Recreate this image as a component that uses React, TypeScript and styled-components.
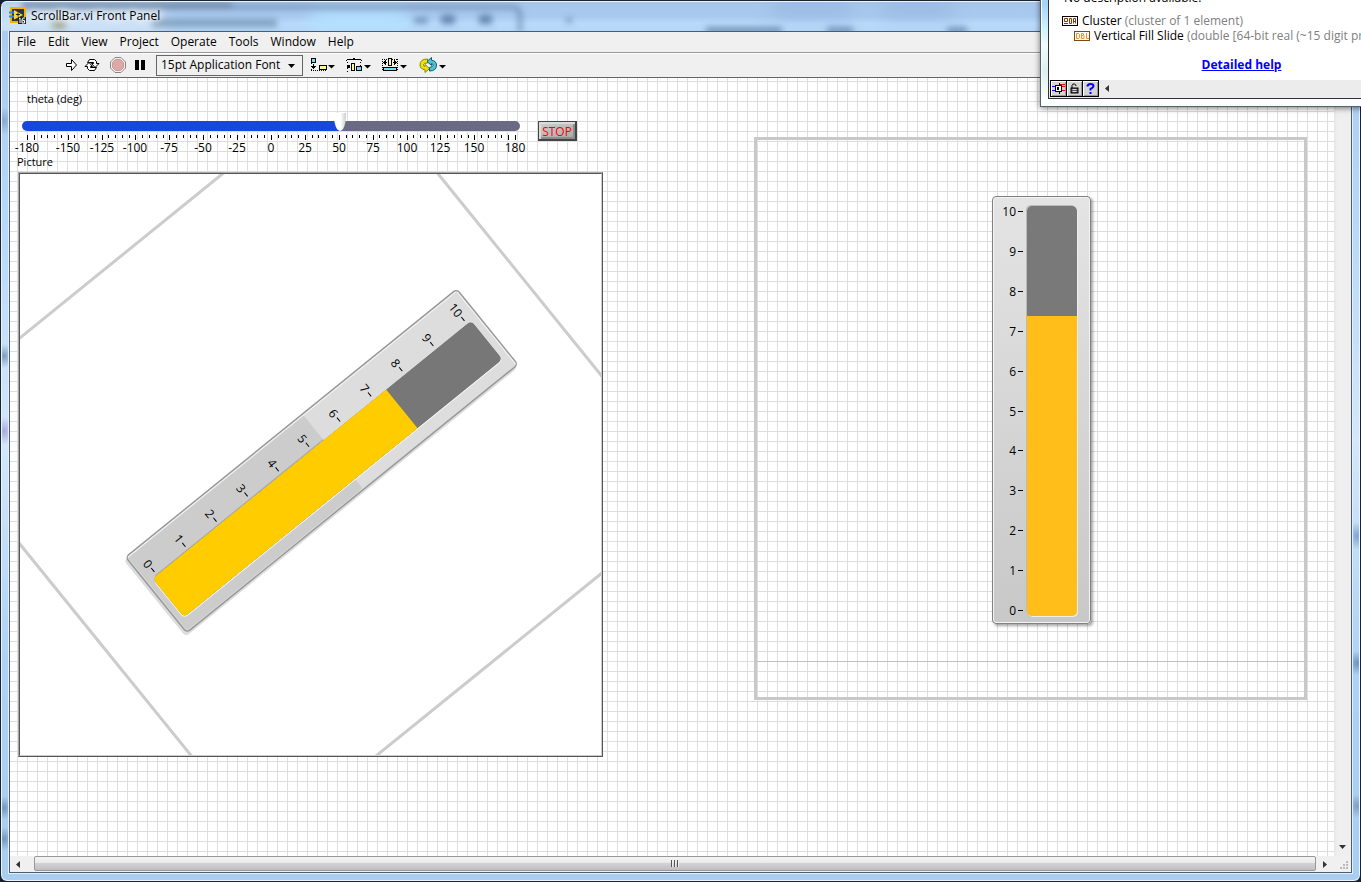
import React, { useState } from "react";
import styled, { createGlobalStyle } from "styled-components";

const GlobalStyle = createGlobalStyle`
  *, *::before, *::after { box-sizing: border-box; }
  body {
    margin: 0;
    font-family: "Open Sans", "Noto Sans", sans-serif;
    font-size: 12px;
    line-height: 16px;
    color: #000;
    background: #17202c;
  }
  button, select, input { font: inherit; color: inherit; margin: 0; }
`;

/* ---------- window frame ---------- */

const Desktop = styled.div`
  position: relative;
  min-height: 100vh;
  display: flex;
  overflow: hidden;
`;

const WindowFrame = styled.div`
  position: relative;
  flex: 1;
  min-width: 0;
  display: flex;
  flex-direction: column;
  padding: 0 8px 8px;
  border: 1px solid #1b2330;
  border-radius: 7px;
  box-shadow: inset 0 0 0 1px #e8f6ff;
  background:
    radial-gradient(ellipse 10px 12px at 3px 355px, #7f9dbc, transparent),
    radial-gradient(ellipse 10px 14px at 3px 120px, #8aa8cc, transparent),
    radial-gradient(ellipse 10px 14px at 3px 430px, #a9a9e0, transparent),
    radial-gradient(ellipse 10px 12px at 3px 807px, #7697bd, transparent),
    radial-gradient(ellipse 10px 12px at 3px 838px, #7697bd, transparent),
    radial-gradient(ellipse 10px 14px at calc(100% - 3px) 535px, #7ea4cf, transparent),
    radial-gradient(ellipse 10px 12px at calc(100% - 3px) 662px, #6f93bb, transparent),
    radial-gradient(ellipse 10px 12px at calc(100% - 3px) 805px, #7f9fc0, transparent),
    linear-gradient(#a9c9ee, #b6d8fa 25%, #d5e7f8 50%, #aed2f6 75%, #aacdf2);
`;

const TitleBar = styled.header`
  position: relative;
  height: 30px;
  display: flex;
  align-items: center;
  gap: 4px;
  margin: 0 -7px;
  padding: 0 7px 2px;
  border-top: 1px solid #e8f6ff;
  border-radius: 6px 6px 0 0;
  overflow: hidden;
  background: linear-gradient(#a6c6ec, #a9caef 50%, #b9dafa 75%, #b4d6f8);
`;

const GlassReflection = styled.svg`
  position: absolute;
  inset: 0;
  width: 100%;
  height: 100%;
`;

const TitleText = styled.h1`
  position: relative;
  margin: 0;
  font-size: 12px;
  font-weight: 400;
  line-height: 16px;
  white-space: nowrap;
  text-shadow: 0 0 6px #fff, 0 0 8px #fff, 0 0 12px #fff;
`;

const TitleIcon = styled.svg`
  position: relative;
  flex: none;
`;

const Client = styled.main`
  flex: 1;
  display: flex;
  flex-direction: column;
  min-height: 0;
  border: 1px solid #4d5c70;
  background: #f0f0f0;
  box-shadow: 0 0 0 1px #dff0ff;
`;

/* ---------- menu and toolbar ---------- */

const MenuBar = styled.nav`
  display: flex;
  height: 21px;
  padding: 0 1px;
  border-bottom: 1px solid #999;
`;

const MenuItem = styled.button`
  border: 0;
  padding: 0 6px;
  line-height: 18px;
  background: none;
  white-space: nowrap;
`;

const Toolbar = styled.div`
  display: flex;
  align-items: center;
  height: 25px;
  padding-left: 53px;
  border-top: 1px solid #fff;
  border-bottom: 1px solid #666;
`;

const ToolButton = styled.button<{ $width: number }>`
  display: grid;
  place-items: center;
  flex: none;
  width: ${(p) => p.$width}px;
  height: 20px;
  margin-bottom: 2px;
  padding: 0;
  border: 0;
  background: none;
`;

const FontPicker = styled.label`
  position: relative;
  flex: none;
  margin: 0 6px 0 7px;
`;

const FontSelect = styled.select`
  appearance: none;
  display: block;
  width: 147px;
  height: 21px;
  padding: 0 20px 1px 4px;
  border: 1px solid #666;
  border-radius: 0;
  line-height: 18px;
  background: #f0f0f0;
`;

const FontArrow = styled.svg`
  position: absolute;
  right: 8px;
  top: 9px;
  pointer-events: none;
`;

/* ---------- front panel ---------- */

const Workspace = styled.div`
  flex: 1;
  display: grid;
  grid-template-columns: minmax(0, 1fr) 17px;
  grid-template-rows: 1fr 16px;
`;

const Panel = styled.section`
  display: flex;
  align-items: flex-start;
  overflow: hidden;
  background-color: #fff;
  background-image:
    linear-gradient(#dedede 1px, transparent 1px),
    linear-gradient(90deg, #dedede 1px, transparent 1px);
  background-size: 10px 10px;
  background-position: 7px 3px;
`;

const ControlColumn = styled.div`
  flex: none;
  padding: 12px 0 0 8px;
`;

const ControlRow = styled.div`
  display: flex;
  padding-left: 4px;
`;

const ThetaControl = styled.div`
  width: 498px;
`;

const ThetaLabel = styled.label`
  display: block;
  padding-left: 5px;
  font-size: 11px;
  line-height: 18px;
`;

const ThetaInput = styled.input<{ $fill: number }>`
  appearance: none;
  display: block;
  width: 100%;
  height: 10px;
  margin-top: 13px;
  background: none;

  &::-webkit-slider-runnable-track {
    height: 10px;
    border-radius: 5px;
    background: linear-gradient(90deg, #1846e0 ${(p) => p.$fill}%, #6b6a85 ${(p) => p.$fill}%);
  }
  &::-webkit-slider-thumb {
    appearance: none;
    width: 12px;
    height: 18px;
    margin-top: -8px;
    border-radius: 0 0 6px 6px / 0 0 15px 15px;
    background: linear-gradient(90deg, #fff 55%, #ccc);
  }
`;

const ThetaScale = styled.svg`
  display: block;
  width: 100%;
  height: 23px;
  overflow: visible;
  font-size: 12px;
`;

const StopButton = styled.button`
  width: 39px;
  height: 20px;
  margin: 31px 0 0 18px;
  padding: 2px 0 0;
  border: 1px solid #444;
  border-bottom-width: 2px;
  border-right-width: 2px;
  color: #f00;
  line-height: 16px;
  background: linear-gradient(160deg, #cfcfcf, #a8a8a8);
  box-shadow: inset 2px 2px 1px #dcdcdc, inset -2px -2px 1px #8a8a8a;
`;

const PictureFigure = styled.figure`
  margin: 0;
  display: flex;
  flex-direction: column;
`;

const PictureCaption = styled.figcaption`
  margin: 0 0 2px -1px;
  font-size: 11px;
  line-height: 16px;
`;

const PictureFrame = styled.div`
  width: 585px;
  border: 1px solid;
  border-color: #aaa #555 #555 #aaa;
`;

const PictureView = styled.svg`
  display: block;
  width: 583px;
  height: 583px;
  border: 1px solid;
  border-color: #555 #ccc #ccc #555;
  background: #fff;
  font-size: 12px;
`;

const Cluster = styled.div`
  flex: none;
  width: 553px;
  height: 563px;
  margin: 59px 0 0 151px;
  padding-top: 56px;
  border: 3px solid #c8c8c8;
`;

const ClusterRule = styled.hr`
  height: 1px;
  margin: 37px 0 0;
  border: 0;
  background: #c0c0c0;
`;

const FillSlide = styled.div`
  display: flex;
  width: 99px;
  height: 428px;
  margin-left: 235px;
  padding: 9px 0 8px;
  border: 1px solid #808080;
  border-radius: 4px;
  background: linear-gradient(#e4e4e4, #c8c8c8);
  box-shadow: inset 0 0 0 1px #f4f4f4, 2px 2px 3px rgba(0, 0, 0, 0.35);
`;

const SlideScale = styled.svg`
  width: 34px;
  height: 410px;
  overflow: visible;
  font-size: 12px;
`;

const SlideInput = styled.input<{ $fill: number }>`
  appearance: none;
  writing-mode: vertical-lr;
  direction: rtl;
  width: 50px;
  height: 410px;
  border-radius: 5px;
  background: linear-gradient(0deg, #ffbe19 ${(p) => p.$fill}%, #797979 ${(p) => p.$fill}%);
  box-shadow: -1px -1px 0 #bbb, 1px 1px 0 #eee;

  &::-webkit-slider-thumb {
    appearance: none;
    width: 50px;
    height: 10px;
    background: transparent;
  }
`;

/* ---------- scroll bars ---------- */

const VerticalScroll = styled.div`
  display: flex;
  flex-direction: column;
  justify-content: space-between;
  padding-bottom: 2px;
  background: linear-gradient(90deg, #e6e6e6, #efefef 20%, #efefef);
`;

const HorizontalScroll = styled.div`
  display: flex;
  background: #f0f0f0;
`;

const ScrollButton = styled.button<{ $gap?: number }>`
  flex: none;
  display: grid;
  place-items: center;
  width: 16px;
  height: 16px;
  margin-right: ${(p) => p.$gap ?? 0}px;
  padding: 0;
  border: 0;
  background: none;
`;

const ScrollThumb = styled.div`
  flex: 1;
  display: grid;
  place-items: center;
  height: 15px;
  border: 1px solid #979797;
  border-radius: 2px;
  background: linear-gradient(#f5f5f5, #e9e9eb 45%, #d2d2d5 50%, #bfbfc3);
`;

const SizeGrip = styled.svg`
  width: 16px;
  height: 16px;
`;

/* ---------- context help window ---------- */

const HelpWindow = styled.aside`
  position: absolute;
  top: -30px;
  right: -82px;
  width: 403px;
  height: 137px;
  padding: 0 7px 7px;
  border: 1px solid #59616b;
  background: linear-gradient(#a8d4f8 25%, #cdf3fb 42%, #eefcfc 55%, #dcf0ee 75%, #fdfdfd 95%);
  box-shadow: inset 0 0 0 1px #f4ffff, 0 1px 6px rgba(0, 0, 0, 0.55);
`;

const HelpClient = styled.div`
  height: 100%;
  display: flex;
  flex-direction: column;
  border: 1px solid #30343a;
  background: #fff;
`;

const HelpText = styled.p`
  margin: 18px 0 7px 15px;
`;

const HelpRow = styled.div<{ $indent: number }>`
  display: flex;
  align-items: center;
  gap: 4px;
  height: 15px;
  padding-left: ${(p) => p.$indent}px;
  white-space: nowrap;
`;

const Muted = styled.span`
  color: #808080;
`;

const HelpLink = styled.a`
  align-self: center;
  margin-top: 14px;
  font-weight: 700;
  color: #00f;
`;

const HelpBar = styled.div`
  display: flex;
  align-items: flex-start;
  margin-top: auto;
  height: 18px;
  padding-left: 1px;
  background: #ececec;
`;

const HelpButton = styled.button`
  display: grid;
  place-items: center;
  width: 17px;
  height: 17px;
  margin-right: -1px;
  padding: 0;
  border: 1px solid #000;
  background: #d4d4d4;
  box-shadow: inset 1px 1px 0 #fff, inset -1px -1px 0 #999;
`;

const HelpCollapse = styled.button`
  display: grid;
  place-items: center;
  width: 18px;
  height: 16px;
  padding: 0;
  border: 0;
  background: none;
`;

/* ---------- drawings ---------- */

const DropArrow = ({ x, y }: { x: number; y: number }) => (
  <path d={`M${x} ${y}h7l-3.500 3.500z`} fill="#000" shapeRendering="auto" />
);

const LabViewIcon = () => (
  <TitleIcon width="18" height="18" viewBox="0 0 18 18" aria-hidden="true">
    <rect x="2" y="1" width="14" height="14" fill="#2e3338" stroke="#f0b400" strokeWidth="2" />
    <path d="M0 5.500h6M0 9.500h6" stroke="#2d8be0" strokeWidth="2" />
    <path d="M5 3v9.500l9-4.500z" fill="#ffd633" />
    <path d="M7 7.500h4M9 5.500v4" stroke="#222" strokeWidth="1" />
    <rect x="9" y="10" width="8" height="7" fill="#222" />
    <path d="M10 11.500l1-.5v5M16 11h-2l-1 2v3h2.500v-2.500h-2" stroke="#fff" fill="none" />
  </TitleIcon>
);

const GlassShapes = () => (
  <GlassReflection aria-hidden="true">
    <defs>
      <filter id="soft" x="-20%" y="-50%" width="140%" height="200%">
        <feGaussianBlur stdDeviation="3" />
      </filter>
      <filter id="softer" x="-50%" y="-100%" width="200%" height="300%">
        <feGaussianBlur stdDeviation="9" />
      </filter>
    </defs>
    <rect x="-10" y="0" width="170" height="34" fill="#d8e6f4" opacity="0.7" filter="url(#softer)" />
    <rect x="310" y="8" width="95" height="26" fill="#b4e0ff" filter="url(#softer)" />
    <rect x="770" y="0" width="80" height="15" fill="#8dafd8" opacity="0.6" filter="url(#softer)" />
    <rect x="880" y="0" width="70" height="15" fill="#8dafd8" opacity="0.6" filter="url(#softer)" />
    <g filter="url(#soft)">
      <path d="M20 5H510Q518 5 518 13V30" fill="none" stroke="#58789c" strokeWidth="4" opacity="0.7" />
      <rect x="20" y="0" width="210" height="5" fill="#5a6f86" opacity="0.6" />
      <rect x="150" y="17" width="125" height="8" fill="#5d7998" opacity="0.6" />
      <rect x="50" y="18" width="14" height="9" fill="#8a8a58" opacity="0.6" />
      <rect x="412" y="16" width="14" height="5" fill="#43678f" opacity="0.7" />
      <rect x="439" y="13" width="14" height="9" fill="#43678f" opacity="0.7" />
      <rect x="477" y="13" width="13" height="9" fill="#43678f" opacity="0.7" />
      <rect x="564" y="16" width="6" height="5" fill="#43678f" opacity="0.6" />
      <rect x="704" y="25" width="76" height="7" fill="#5478a0" opacity="0.7" />
      <rect x="825" y="25" width="26" height="7" fill="#5478a0" opacity="0.7" />
      <rect x="945" y="25" width="20" height="7" fill="#5478a0" opacity="0.7" />
    </g>
  </GlassReflection>
);

const RunIcon = () => (
  <svg width="13" height="14" viewBox="0 0 13 14" aria-hidden="true">
    <path d="M1.500 5.500h5v-4l5 5.500-5 5.500v-4h-5z" fill="#fff" stroke="#000" />
  </svg>
);

const RunContinuouslyIcon = () => (
  <svg width="16" height="14" viewBox="0 0 16 14" aria-hidden="true">
    <g fill="#fff" stroke="#000">
      <path id="turn" d="M3.500 4.500l2-3h5l2 2v2H15L11 9.500 7.500 5.500h2v-1z" />
      <path d="M3.500 4.500l2-3h5l2 2v2H15L11 9.500 7.500 5.500h2v-1z" transform="rotate(180 8 7)" />
    </g>
  </svg>
);

const AbortIcon = () => (
  <svg width="16" height="16" viewBox="0 0 16 16" aria-hidden="true">
    <path d="M5 .5h6L15.500 5v6L11 15.500H5L.5 11V5z" fill="#f4f0f0" stroke="#8c8484" />
    <path d="M5.500 2.500h5l3 3v5l-3 3h-5l-3-3v-5z" fill="#dca8a8" stroke="#c99" />
  </svg>
);

const PauseIcon = () => (
  <svg width="10" height="12" viewBox="0 0 10 12" shapeRendering="crispEdges" aria-hidden="true">
    <path d="M0 1h4v10H0zM6 1h4v10H6z" fill="#000" />
  </svg>
);

const AlignIcon = () => (
  <svg width="26" height="16" viewBox="0 0 26 16" shapeRendering="crispEdges" aria-hidden="true">
    <rect x="1.500" y="1.500" width="4" height="4" fill="#6fe0f0" stroke="#000" />
    <path d="M3 7h1v5H3zM1 9h5v1H1zM2 10h3v1H2z" fill="#000" />
    <path d="M1 13.500h16" stroke="#000" strokeDasharray="1 1" />
    <path d="M1.500 6v7" stroke="#000" strokeDasharray="1 2" />
    <rect x="9.500" y="8.500" width="7" height="4" fill="#fff79a" stroke="#000" />
    <DropArrow x={18} y={8} />
  </svg>
);

const DistributeIcon = () => (
  <svg width="26" height="16" viewBox="0 0 26 16" shapeRendering="crispEdges" aria-hidden="true">
    <path d="M0 3h1V2h6V1h2v1h6v1h1v1h-1V3H1v1H0z" fill="#000" />
    <rect x="1" y="8" width="3" height="3" fill="#000" />
    <path d="M1.500 5v10M14.500 5v4" stroke="#000" strokeDasharray="1 2" />
    <rect x="5.500" y="6.500" width="3" height="7" fill="#fff79a" stroke="#000" />
    <rect x="10.500" y="9.500" width="5" height="4" fill="#6fe0f0" stroke="#000" />
    <DropArrow x={18} y={8} />
  </svg>
);

const ResizeIcon = () => (
  <svg width="26" height="16" viewBox="0 0 26 16" shapeRendering="crispEdges" aria-hidden="true">
    <path d="M0 2.500h16M.5 2v12M15.500 2v12" stroke="#000" strokeDasharray="1 1" fill="none" />
    <path d="M1 5h4v1H1zM2 4h1v3H2zM3 3h1v5H3zM11 5h4v1h-4zM13 4h1v3h-1zM12 3h1v5h-1z" fill="#000" />
    <rect x="6.500" y="1.500" width="3" height="7" fill="#fff79a" stroke="#000" />
    <rect x="1.500" y="10.500" width="13" height="3" fill="#6fe0f0" stroke="#000" />
    <DropArrow x={18} y={8} />
  </svg>
);

const ReorderIcon = () => (
  <svg width="28" height="16" viewBox="0 0 28 16" aria-hidden="true">
    <path d="M8.500 2Q1 2 1 8q0 4 5 4.800V15.500l4.500-4-4.500-4v2Q4 9 4.500 7.500 5 6 8.500 6z" fill="#ece400" stroke="#8a8400" />
    <path d="M10.500 14q7 0 7-6 0-4-5-4.800V.5L8 4.500l4.500 4v-2q2 .5 1.500 2T10.500 10.500z" fill="#4cc4d8" stroke="#11606e" />
    <DropArrow x={20} y={8} />
  </svg>
);

const Arrow = ({ dir }: { dir: "left" | "right" | "down" | "up" }) => {
  const paths = {
    left: "M6 1v7L2 4.500z",
    right: "M3 1v7l4-3.500z",
    down: "M1 3h7L4.500 7z",
    up: "M1 6h7L4.500 2z",
  };
  return (
    <svg width="9" height="9" viewBox="0 0 9 9" aria-hidden="true">
      <path d={paths[dir]} fill="#333" />
    </svg>
  );
};

const ClusterIcon = () => (
  <svg width="16" height="10" viewBox="0 0 16 10" aria-hidden="true">
    <rect x="0.500" y="0.500" width="15" height="9" fill="#fff" stroke="#000" />
    <path d="M2.500 5.500v-3h3v3zM2 7.500h4M7.500 2.500h2v5h-2zM11.500 7.500v-5h2v5M11.500 5.500h2" fill="none" stroke="#8c3a0c" />
  </svg>
);

const DoubleIcon = () => (
  <svg width="16" height="10" viewBox="0 0 16 10" aria-hidden="true">
    <rect x="0.500" y="0.500" width="15" height="9" fill="#fff" stroke="#7a4a10" />
    <path d="M2.500 2.500h2l1 1v3l-1 1h-2zM7.500 2.500h2v2h-2zM7.500 4.500v3h2.500v-3M12.500 2v5.500H15" fill="none" stroke="#ff8c1a" />
  </svg>
);

const TerminalIcon = () => (
  <svg width="15" height="13" viewBox="0 0 15 13" shapeRendering="crispEdges" aria-hidden="true">
    <path d="M1 4.500h4M1 8.500h4" stroke="#00f" />
    <path d="M9 2.500h5M9 4.500h5M9 8.500h5" stroke="#e00" />
    <path d="M8.500 1v11" stroke="#000" />
    <rect x="4.500" y="3.500" width="6" height="6" fill="#fff" stroke="#000" />
    <path d="M6 5h2v3H6z" fill="#000" />
  </svg>
);

const LockIcon = () => (
  <svg width="13" height="13" viewBox="0 0 13 13" aria-hidden="true">
    <path d="M4 6V3.500Q4.500 1.500 6.500 2 8 2.500 8 4" fill="none" stroke="#000" />
    <rect x="3" y="6" width="7" height="5" fill="#555" stroke="#000" />
    <path d="M4.500 7.500h4M4.500 9.500h4" stroke="#ddd" />
  </svg>
);

const QuestionIcon = () => (
  <svg width="11" height="13" viewBox="0 0 11 13" aria-hidden="true">
    <path d="M2.500 4.500Q2.500 2 5.500 2T8.500 4Q8.500 5.500 5.500 7v1.500" fill="none" stroke="#00f" strokeWidth="2" />
    <rect x="4.500" y="10" width="2" height="2" fill="#00f" />
  </svg>
);

/* ---------- scales ---------- */

const thetaX = (deg: number) => Math.round(5 + ((deg + 180) / 360) * 488);
const thetaTicks = Array.from({ length: 73 }, (_, i) => -180 + i * 5);
const thetaLabels = [-180, -150, -125, -100, -75, -50, -25, 0, 25, 50, 75, 100, 125, 150, 180];
const units = Array.from({ length: 11 }, (_, i) => i);

const ThetaScaleMarks = () => (
  <ThetaScale aria-hidden="true">
    {thetaTicks.map((deg) => (
      <rect
        key={deg}
        x={thetaX(deg)}
        y={4}
        width={1}
        height={deg % 25 === 0 || Math.abs(deg) === 180 ? 5 : 3}
      />
    ))}
    {thetaLabels.map((deg) => (
      <text key={deg} x={thetaX(deg)} y={21} textAnchor="middle">
        {deg}
      </text>
    ))}
  </ThetaScale>
);

/** Marks of the 0 to 10 scale; the zero mark lies at `bottom`. */
const UnitMarks = ({ right, bottom }: { right: number; bottom: number }) => (
  <g>
    {units.map((n) => {
      const y = Math.round(bottom - n * 39.9);
      return (
        <g key={n}>
          <rect x={right - 5} y={y} width={5} height={1} />
          <text x={right - 7} y={y + 5} textAnchor="end">
            {n}
          </text>
        </g>
      );
    })}
  </g>
);

const RotatedCluster = ({ theta, value }: { theta: number; value: number }) => {
  const fillTop = 472 - value * 39.9;
  return (
    <PictureView viewBox="0 0 581 581" role="img" aria-label="Rotated cluster">
      <defs>
        <clipPath id="bar">
          <rect x="272" y="68" width="50" height="410" rx="5" />
        </clipPath>
      </defs>
      <g transform={`translate(289 283) rotate(${theta}) translate(-276 -280)`}>
        <rect x="1.500" y="1.500" width="549" height="558" fill="none" stroke="#ccc" strokeWidth="3" />
        <rect x="240" y="62" width="98" height="427" rx="4" fill="#ddd" />
        <rect x="238.500" y="59.500" width="97" height="426" rx="4" fill="#ddd" stroke="#999" strokeWidth="1.500" />
        <rect x="240" y="258" width="94" height="226" rx="2" fill="#ccc" />
        <path d="M241 61H334M240 62V484" stroke="#f4f4f4" fill="none" />
        <path d="M271.500 258V474" stroke="#aaa" />
        <path d="M322.500 70V473q0 5.500-5 5.500H277" stroke="#f4f4f4" fill="none" />
        <g clipPath="url(#bar)">
          <rect x="272" y="68" width="50" height="410" fill="#777" />
          <rect x="272" y={fillTop} width="50" height="310" fill="#fc0" />
        </g>
        <UnitMarks right={268} bottom={472} />
      </g>
    </PictureView>
  );
};

/* ---------- page ---------- */

const menus = ["File", "Edit", "View", "Project", "Operate", "Tools", "Window", "Help"];

export default function App() {
  const [theta, setTheta] = useState(51);
  const [level, setLevel] = useState(7.38);
  const thetaFill = ((6 + ((theta + 180) / 360) * 486) / 498) * 100;
  const levelFill = ((5.5 + level * 39.9) / 410) * 100;

  return (
    <Desktop>
      <GlobalStyle />
      <WindowFrame>
        <TitleBar>
          <GlassShapes />
          <LabViewIcon />
          <TitleText>ScrollBar.vi Front Panel</TitleText>
        </TitleBar>
        <Client>
          <MenuBar>
            {menus.map((m) => (
              <MenuItem key={m}>{m}</MenuItem>
            ))}
          </MenuBar>
          <Toolbar>
            <ToolButton $width={16} aria-label="Run"><RunIcon /></ToolButton>
            <ToolButton $width={26} aria-label="Run continuously"><RunContinuouslyIcon /></ToolButton>
            <ToolButton $width={26} aria-label="Abort"><AbortIcon /></ToolButton>
            <ToolButton $width={18} aria-label="Pause"><PauseIcon /></ToolButton>
            <FontPicker>
              <FontSelect aria-label="Text settings" defaultValue="app">
                <option value="app">15pt Application Font</option>
              </FontSelect>
              <FontArrow width="7" height="4" viewBox="0 0 7 4" aria-hidden="true">
                <path d="M0 0h7L3.500 4z" />
              </FontArrow>
            </FontPicker>
            <ToolButton $width={28} aria-label="Align objects"><AlignIcon /></ToolButton>
            <ToolButton $width={44} aria-label="Distribute objects"><DistributeIcon /></ToolButton>
            <ToolButton $width={28} aria-label="Resize objects"><ResizeIcon /></ToolButton>
            <ToolButton $width={48} aria-label="Reorder"><ReorderIcon /></ToolButton>
          </Toolbar>
          <Workspace>
            <Panel>
              <ControlColumn>
                <ControlRow>
                  <ThetaControl>
                    <ThetaLabel htmlFor="theta">theta (deg)</ThetaLabel>
                    <ThetaInput
                      id="theta"
                      type="range"
                      min={-180}
                      max={180}
                      value={theta}
                      $fill={thetaFill}
                      onChange={(e) => setTheta(Number(e.target.value))}
                    />
                    <ThetaScaleMarks />
                  </ThetaControl>
                  <StopButton>STOP</StopButton>
                </ControlRow>
                <PictureFigure>
                  <PictureCaption>Picture</PictureCaption>
                  <PictureFrame>
                    <RotatedCluster theta={theta} value={level} />
                  </PictureFrame>
                </PictureFigure>
              </ControlColumn>
              <Cluster>
                <FillSlide>
                  <SlideScale aria-hidden="true">
                    <UnitMarks right={30} bottom={404} />
                  </SlideScale>
                  <SlideInput
                    type="range"
                    aria-label="Vertical Fill Slide"
                    min={0}
                    max={10}
                    step={0.01}
                    value={level}
                    $fill={levelFill}
                    onChange={(e) => setLevel(Number(e.target.value))}
                  />
                </FillSlide>
                <ClusterRule />
              </Cluster>
            </Panel>
            <VerticalScroll>
              <ScrollButton aria-label="Scroll up"><Arrow dir="up" /></ScrollButton>
              <ScrollButton aria-label="Scroll down"><Arrow dir="down" /></ScrollButton>
            </VerticalScroll>
            <HorizontalScroll>
              <ScrollButton $gap={8} aria-label="Scroll left"><Arrow dir="left" /></ScrollButton>
              <ScrollThumb>
                <svg width="8" height="7" viewBox="0 0 8 7" shapeRendering="crispEdges" aria-hidden="true">
                  <path d="M.5 0v7M3.500 0v7M6.500 0v7" stroke="#555" />
                  <path d="M1.500 0v7M4.500 0v7M7.500 0v7" stroke="#eee" />
                </svg>
              </ScrollThumb>
              <ScrollButton $gap={2} aria-label="Scroll right"><Arrow dir="right" /></ScrollButton>
            </HorizontalScroll>
            <SizeGrip viewBox="0 0 16 16" shapeRendering="crispEdges" aria-hidden="true">
              <path
                d="M12 5h2v2h-2zM9 8h2v2H9zM12 8h2v2h-2zM6 11h2v2H6zM9 11h2v2H9zM12 11h2v2h-2z"
                fill="#bbb"
              />
            </SizeGrip>
          </Workspace>
        </Client>
      </WindowFrame>
      <HelpWindow aria-label="Context Help">
        <HelpClient>
          <HelpText>No description available!</HelpText>
          <HelpRow $indent={13}>
            <ClusterIcon />
            <span>Cluster <Muted>(cluster of 1 element)</Muted></span>
          </HelpRow>
          <HelpRow $indent={25}>
            <DoubleIcon />
            <span>Vertical Fill Slide <Muted>(double [64-bit real (~15 digit precision)])</Muted></span>
          </HelpRow>
          <HelpLink href="#help">Detailed help</HelpLink>
          <HelpBar>
            <HelpButton aria-label="Show optional terminals"><TerminalIcon /></HelpButton>
            <HelpButton aria-label="Lock help"><LockIcon /></HelpButton>
            <HelpButton aria-label="Open help"><QuestionIcon /></HelpButton>
            <HelpCollapse aria-label="Scroll help left"><Arrow dir="left" /></HelpCollapse>
          </HelpBar>
        </HelpClient>
      </HelpWindow>
    </Desktop>
  );
}
